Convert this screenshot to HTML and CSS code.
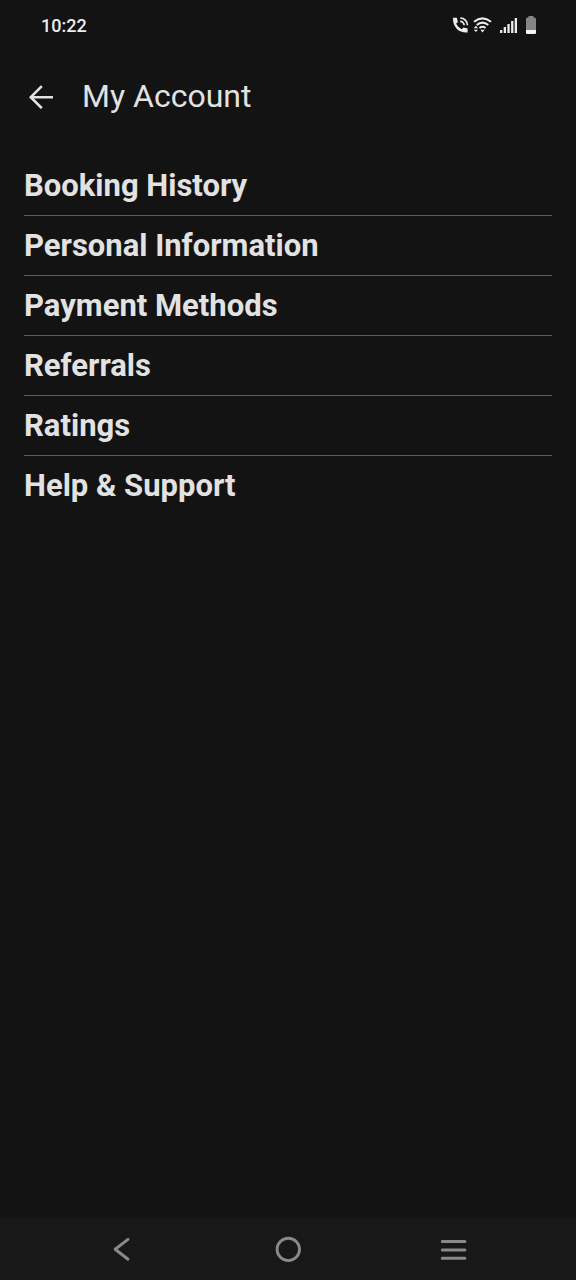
FILE: index.html
```html
<!DOCTYPE html>
<html lang="en">
<head>
<meta charset="utf-8">
<meta name="viewport" content="width=device-width, initial-scale=1">
<title>My Account</title>
<link rel="stylesheet" href="styles.css">
</head>
<body>
<div class="status-bar">
  <time class="clock">10:22</time>
  <div class="status-icons">
    <svg class="icon-call" width="17" height="17" viewBox="0 0 17 17" aria-hidden="true">
      <path d="M1 .8H4.8L5.9 5L4.1 6.8Q6 10.4 9.7 12.2L11.5 10.4L15.6 11.4V15.5Q8.6 15.9 4.7 11.7Q.7 7.4 1 .8Z" fill="#ededed"/>
      <path d="M8.2 1A7.1 7.1 0 0 1 15.4 8.3M8.2 4.3A3.9 3.9 0 0 1 12.1 8.3" fill="none" stroke="#ededed" stroke-width="1.7"/>
    </svg>
    <svg class="icon-wifi" width="19" height="17" viewBox="0 0 19 17" aria-hidden="true">
      <path d="M1 4.7Q9.5-2 18 4.7M3.7 8Q9.5 3.3 15.3 8M6.5 11Q9.5 8.6 12.5 11" fill="none" stroke="#ededed" stroke-width="2"/>
      <path d="M7.4 12.8H11.6L9.5 15.4ZM.8 11.2L2.9 8.8L5 11.2ZM.8 12.7H5L2.9 15.1Z" fill="#ededed"/>
    </svg>
    <svg class="icon-signal" width="18" height="17" viewBox="0 0 18 17" aria-hidden="true">
      <path d="M0 13H2.3V16H0ZM3.7 10H6V16H3.7ZM7.4 7H9.7V16H7.4ZM11.1 4H13.4V16H11.1ZM14.7 1H17V16H14.7Z" fill="#ededed"/>
    </svg>
    <svg class="icon-battery" width="10" height="18" viewBox="0 0 10 18" aria-hidden="true">
      <path d="M2.5 0H7.5V1.5H8.5Q10 1.5 10 3V16.5Q10 18 8.5 18H1.5Q0 18 0 16.5V3Q0 1.5 1.5 1.5H2.5Z" fill="#858585"/>
      <path d="M0 14H10V16.5Q10 18 8.5 18H1.5Q0 18 0 16.5Z" fill="#f5f5f5"/>
    </svg>
  </div>
</div>
<header class="app-bar">
  <button class="back-button" type="button" aria-label="Back">
    <svg width="26" height="26" viewBox="0 0 26 26" aria-hidden="true"><path d="M25 14.2H3.5M13.8 3.2L2.8 14.2L13.8 25.2" fill="none" stroke="#e2e2e2" stroke-width="2.6"/></svg>
  </button>
  <h1 class="title">My Account</h1>
</header>
<main class="content">
  <ul class="menu">
    <li class="menu-item"><a class="menu-link" href="#history">Booking History</a></li>
    <li class="menu-item"><a class="menu-link" href="#personal">Personal Information</a></li>
    <li class="menu-item"><a class="menu-link" href="#payment">Payment Methods</a></li>
    <li class="menu-item"><a class="menu-link" href="#referrals">Referrals</a></li>
    <li class="menu-item"><a class="menu-link" href="#ratings">Ratings</a></li>
    <li class="menu-item"><a class="menu-link" href="#help">Help &amp; Support</a></li>
  </ul>
</main>
<nav class="system-nav" aria-label="System">
  <button class="nav-button" type="button" aria-label="Back">
    <svg width="28" height="28" viewBox="0 0 28 28" aria-hidden="true"><path d="M20 4.4L7.2 14.3L20 24.2" fill="none" stroke="#898989" stroke-width="3" stroke-linecap="round" stroke-linejoin="round"/></svg>
  </button>
  <button class="nav-button" type="button" aria-label="Home">
    <svg width="28" height="28" viewBox="0 0 28 28" aria-hidden="true"><circle cx="14.3" cy="14.4" r="11.2" fill="none" stroke="#898989" stroke-width="2.9"/></svg>
  </button>
  <button class="nav-button" type="button" aria-label="Recent apps">
    <svg width="28" height="28" viewBox="0 0 28 28" aria-hidden="true"><path d="M2.3 6.5H24.9M2.3 15H24.9M2.3 23.2H24.9" fill="none" stroke="#898989" stroke-width="3" stroke-linecap="round"/></svg>
  </button>
</nav>
</body>
</html>
```
FILE: styles.css
```css
* {
  box-sizing: border-box;
}

body {
  display: flex;
  flex-direction: column;
  min-height: 100vh;
  margin: 0;
  background: #131313;
  color: #e2e2e2;
  font-family: Roboto, "Liberation Sans", sans-serif;
}

button {
  display: flex;
  align-items: center;
  justify-content: center;
  padding: 0;
  border: 0;
  background: none;
}

svg {
  display: block;
}

.status-bar {
  display: flex;
  align-items: center;
  justify-content: space-between;
  height: 50px;
  padding: 0 40px 0 41px;
}

.clock {
  color: #ededed;
  font-size: 18px;
  font-weight: 500;
}

.status-icons {
  display: flex;
  align-items: center;
}

.icon-wifi {
  margin-left: 4px;
}

.icon-signal {
  margin-left: 8px;
}

.icon-battery {
  margin-left: 8px;
}

.app-bar {
  display: flex;
  align-items: center;
  gap: 28px;
  height: 92px;
  padding: 0 28px;
}

.title {
  margin: 0;
  font-size: 32px;
  font-weight: 400;
}

.content {
  flex: 1;
  padding: 14px 24px;
}

.menu {
  margin: 0;
  padding: 0;
  list-style: none;
}

.menu-item + .menu-item {
  border-top: 1px solid #5c5c5c;
}

.menu-link {
  display: block;
  padding: 12px 0 11px;
  color: inherit;
  font-size: 31px;
  font-weight: 700;
  line-height: 36px;
  text-decoration: none;
}

.system-nav {
  display: flex;
  justify-content: space-evenly;
  height: 62px;
  padding: 0 6px;
  background: #181818;
}

.nav-button {
  width: 100px;
}
```
